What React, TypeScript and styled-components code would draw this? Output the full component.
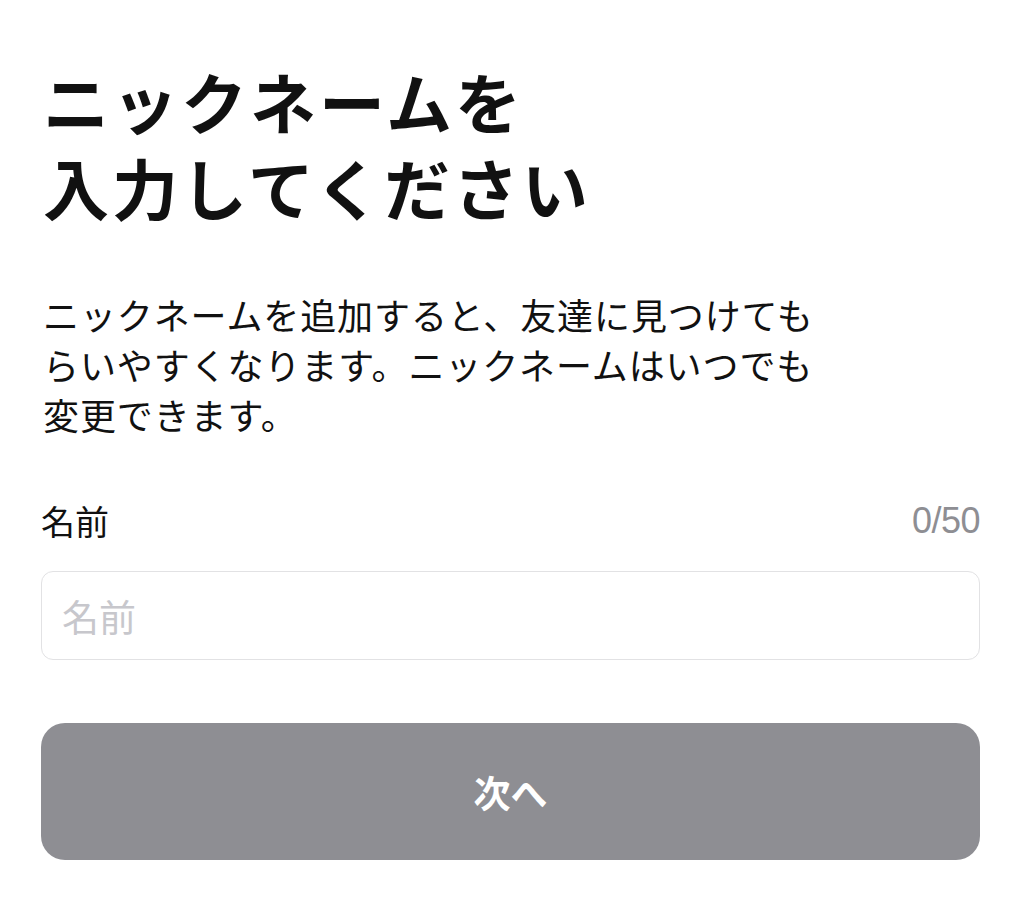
import styled, { createGlobalStyle } from "styled-components";

const GlobalStyle = createGlobalStyle`
  html, body {
    margin: 0;
    padding: 0;
    background: #ffffff;
  }
  body {
    font-family: "Noto Sans CJK JP", "Noto Sans", sans-serif;
    color: #111111;
  }
`;

const Page = styled.div`
  width: 1024px;
  height: 909px;
  box-sizing: border-box;
  padding: 57px 44px 0 41px;
  display: flex;
  flex-direction: column;
`;

const Title = styled.h1`
  margin: 0 0 0 2px;
  font-size: 66px;
  line-height: 86px;
  font-weight: 700;
  letter-spacing: 3px;
  color: #111111;
`;

const Description = styled.p`
  margin: 60px 0 0 2px;
  font-size: 36px;
  line-height: 50px;
  font-weight: 400;
  letter-spacing: 0.9px;
  color: #111111;
`;

const LabelRow = styled.div`
  margin-top: 60px;
  display: flex;
  align-items: center;
  justify-content: space-between;
`;

const Label = styled.span`
  font-size: 34px;
  line-height: 44px;
  color: #111111;
`;

const Counter = styled.span`
  font-family: "Liberation Sans", Arial, sans-serif;
  font-size: 36px;
  line-height: 44px;
  color: #8e8e93;
  letter-spacing: -0.5px;
`;

const Field = styled.input`
  margin-top: 28px;
  height: 89px;
  box-sizing: border-box;
  width: 100%;
  border: 1.5px solid #e2e2e4;
  border-radius: 12px;
  padding: 0 20px;
  font-family: "Noto Sans CJK JP", "Noto Sans", sans-serif;
  font-size: 37px;
  color: #111111;
  outline: none;
  background: #ffffff;

  &::placeholder {
    color: #c7c7cc;
  }
`;

const NextButton = styled.button`
  margin-top: 63px;
  height: 137px;
  width: 100%;
  border: none;
  border-radius: 24px;
  background: #8e8e93;
  color: #ffffff;
  font-family: "Noto Sans CJK JP", "Noto Sans", sans-serif;
  font-size: 37px;
  font-weight: 700;
  cursor: default;
`;

export default function App() {
  return (
    <>
      <GlobalStyle />
      <Page>
        <Title>
          ニックネームを
          <br />
          入力してください
        </Title>
        <Description>
          ニックネームを追加すると、友達に見つけても
          <br />
          らいやすくなります。ニックネームはいつでも
          <br />
          変更できます。
        </Description>
        <LabelRow>
          <Label>名前</Label>
          <Counter>0/50</Counter>
        </LabelRow>
        <Field placeholder="名前" />
        <NextButton disabled>次へ</NextButton>
      </Page>
    </>
  );
}
